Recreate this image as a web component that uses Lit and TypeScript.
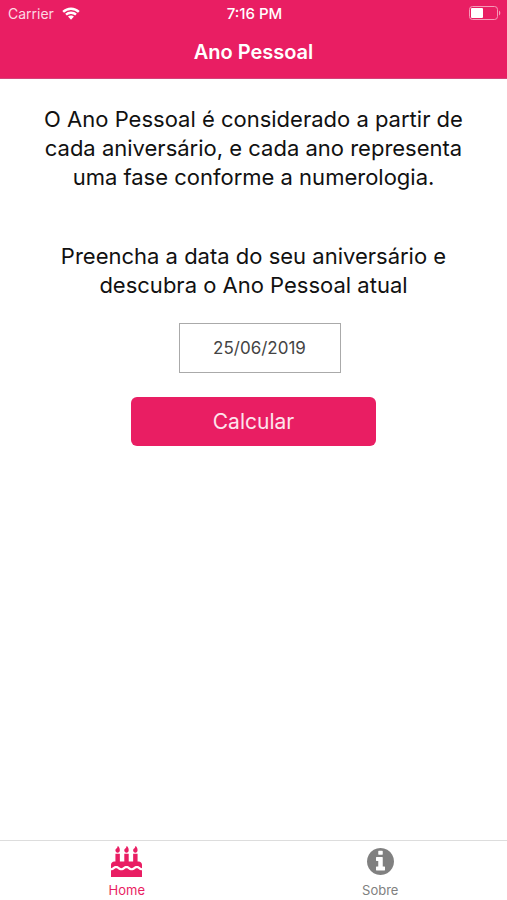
import { LitElement, html, css, svg } from "lit";
import { customElement, state } from "lit/decorators.js";

const flame = (x: number) =>
  svg`<path d="M${x} 96c-18 0-32-14-32-32 0-31 32-23 32-64 12 0 32 29 32 56s-14 40-32 40z" />`;

const cakeIcon = html`<svg class="cake" viewBox="0 0 448 448" aria-hidden="true">
  <path
    d="M448 320c-28 0-31-32-74.5-32-43.5 0-46.8 32-74.75 32-27.7 0-31.45-32-74.75-32-42.8 0-47.2 32-74.5 32-28.15 0-31.2-32-74.75-32C31.2 288 28.1 320 0 320v-48c0-26.5 21.5-48 48-48h16V112h64v112h64V112h64v112h64V112h64v112h16c26.5 0 48 21.5 48 48z"
  />
  <path
    d="M448 448H0v-96c43.35 0 46.75-32 74.75-32 27.95 0 31.25 32 74.75 32 42.85 0 47.2-32 74.5-32 28.15 0 31.2 32 74.75 32 43.35 0 46.75-32 74.75-32 27.5 0 31.25 32 74.5 32z"
  />
  ${[96, 224, 352].map(flame)}
</svg>`;

const infoIcon = html`<svg class="info" viewBox="0 128 1536 1536" aria-hidden="true">
  <path
    d="M1024 1376v-160q0-14-9-23t-23-9h-96v-512q0-14-9-23t-23-9h-320q-14 0-23 9t-9 23v160q0 14 9 23t23 9h96v320h-96q-14 0-23 9t-9 23v160q0 14 9 23t23 9h448q14 0 23-9t9-23zm-128-896v-160q0-14-9-23t-23-9h-192q-14 0-23 9t-9 23v160q0 14 9 23t23 9h192q14 0 23-9t9-23zm640 416q0 209-103 385.5t-279.5 279.5-385.5 103-385.5-103-279.5-279.5-103-385.5 103-385.5 279.5-279.5 385.5-103 385.5 103 279.5 279.5 103 385.5z"
  />
</svg>`;

@customElement("app-root")
export class AppRoot extends LitElement {
  @state() private date = "25/06/2019";

  static styles = css`
    :host {
      display: flex;
      flex-direction: column;
      min-height: 100vh;
      background: #fff;
      color: #111;
      font-family: Inter, "Liberation Sans", sans-serif;
    }
    .header {
      background: #e91e63;
      color: #fff;
      border-bottom: 1px solid #d4447a;
    }
    .status {
      display: grid;
      grid-template-columns: 1fr auto 1fr;
      align-items: center;
      height: 26px;
      padding: 0 6px 0 8px;
      font-size: 14px;
    }
    .carrier {
      display: flex;
      align-items: center;
      gap: 8px;
      color: #fcd9e4;
    }
    .time {
      font-size: 15px;
      font-weight: 500;
    }
    .wifi {
      width: 18px;
      height: 13px;
      fill: #fff;
    }
    .battery {
      justify-self: end;
      width: 32px;
      height: 14px;
    }
    .title {
      margin: 0;
      font-size: 20px;
      font-weight: 600;
      line-height: 52px;
      text-align: center;
    }
    .content {
      flex: 1;
      display: flex;
      flex-direction: column;
      align-items: center;
      padding: 26px 40px;
      font-size: 22px;
      line-height: 29px;
      text-align: center;
    }
    .text {
      margin: 0;
    }
    .prompt {
      display: block;
      margin-top: 50px;
    }
    .date {
      box-sizing: border-box;
      width: 162px;
      height: 50px;
      margin: 23px 0 0 12px;
      border: 1px solid #aaa;
      border-radius: 0;
      background: #fff;
      color: #444;
      font: inherit;
      font-size: 17px;
      text-align: center;
    }
    .submit {
      width: 245px;
      height: 49px;
      margin-top: 24px;
      padding: 0;
      border: 0;
      border-radius: 6px;
      background: #e91e63;
      color: #fde4ec;
      font: inherit;
      font-size: 21px;
    }
    .tabs {
      display: grid;
      grid-template-columns: 1fr 1fr;
      height: 59px;
      border-top: 1px solid #ddd;
    }
    .tab {
      display: flex;
      flex-direction: column;
      align-items: center;
      gap: 4px;
      padding-top: 5px;
      color: #808080;
      fill: currentColor;
      font-size: 13px;
      line-height: 18px;
      text-decoration: none;
    }
    .tab.active {
      color: #e91e63;
    }
    .cake {
      width: 31px;
      height: 31px;
    }
    .info {
      width: 27px;
      height: 27px;
      padding: 2px;
    }
  `;

  private onDate(e: Event) {
    this.date = (e.target as HTMLInputElement).value;
  }

  render() {
    return html`
      <header class="header">
        <div class="status">
          <span class="carrier">
            Carrier
            <svg class="wifi" viewBox="0 0 18 13" aria-hidden="true">
              <path d="M9 .5c3.3 0 6.4 1.3 8.7 3.5L16 5.800A10 10 0 0 0 9 3a10 10 0 0 0-7 2.800L.3 4A12.500 12.500 0 0 1 9 .5z" />
              <path d="M9 4.500c2.200 0 4.300.9 5.800 2.300L13.200 8.500A6 6 0 0 0 9 6.900a6 6 0 0 0-4.200 1.600L3.200 6.800A8.400 8.400 0 0 1 9 4.500z" />
              <path d="M9 8.400c1.200 0 2.200.5 3 1.200l-3 3.100-3-3.100c.8-.7 1.800-1.200 3-1.200z" />
            </svg>
          </span>
          <span class="time">7:16 PM</span>
          <svg class="battery" viewBox="0 0 32 14" aria-hidden="true">
            <rect x="0.5" y="0.5" width="28" height="13" rx="3" fill="none" stroke="#f59ab8" />
            <path d="M30 4.500a3 3 0 0 1 0 5z" fill="#f59ab8" />
            <rect x="2" y="2" width="12" height="10" rx="1" fill="#fff" />
          </svg>
        </div>
        <h1 class="title">Ano Pessoal</h1>
      </header>
      <main class="content">
        <p class="text">
          O Ano Pessoal é considerado a partir de cada aniversário, e cada ano representa uma fase
          conforme a numerologia.
        </p>
        <label class="prompt" for="date">
          Preencha a data do seu aniversário e descubra o Ano Pessoal atual
        </label>
        <input class="date" id="date" type="text" inputmode="numeric" .value=${this.date} @input=${this.onDate} />
        <button class="submit" type="button">Calcular</button>
      </main>
      <nav class="tabs">
        <a class="tab active" href="#home" aria-current="page">${cakeIcon}<span>Home</span></a>
        <a class="tab" href="#sobre">${infoIcon}<span>Sobre</span></a>
      </nav>
    `;
  }
}
